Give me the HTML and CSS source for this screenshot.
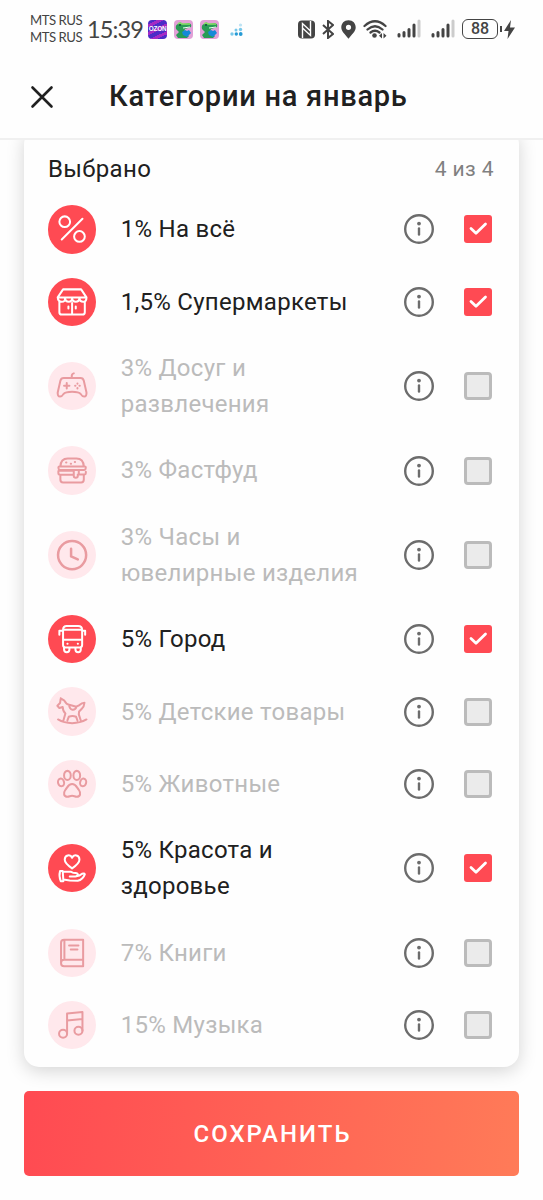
FILE: index.html
```html
<!DOCTYPE html>
<html lang="ru">
<head>
<meta charset="utf-8">
<title>Категории на январь</title>
<link rel="stylesheet" href="styles.css">
</head>
<body>
<svg class="defs" aria-hidden="true">
  <symbol id="percent" viewBox="-72 -72 144 144"><circle cx="-22" cy="-22" r="16"/><circle cx="22" cy="22" r="16"/><path d="M31-31-31 31"/></symbol>
  <symbol id="store" viewBox="-72 -72 144 144"><path d="M-43-14-27-38H27L43-14ZM-43-14q1 13 12 13T-21-12q1 11 11 11T0-12q1 11 11 11T22-12q1 11 11 11T43-14M-38 0V30q0 7 7 7H31q7 0 7-7V0M0 3V37M-11 13v6M11 13v6"/></symbol>
  <symbol id="gamepad" viewBox="-72 -72 144 144"><path d="M-25-24H25Q33-24 35-16L43 19Q44 31 36 31 30 31 26 24 20 17 0 17T-26 24Q-30 31-36 31-44 31-43 19L-35-16Q-33-24-25-24ZM-1-24v-6q0-7 6-8M-16-9V7M-24-1H-8"/><path class="dots" d="M16-8v1M16 6v1M9-1h1M22-1h1"/></symbol>
  <symbol id="burger" viewBox="-72 -72 144 144"><path d="M-35-11Q-34-35-13-35H13Q34-35 35-11M-38-11H38q3 0 3 4 0 6-5 7H-36q-5-1-5-7 0-4 3-4ZM-38 2H5V18q0 5 6 5t6-5V13H38q3 0 3-4V5M-41 3v6q0 5 5 5H5M20 3V12M-35 17V28q0 9 8 9H27q8 0 8-9V17"/><path class="dots" d="M-18-23h1M-4-19h1M8-24h1"/></symbol>
  <symbol id="clock" viewBox="-72 -72 144 144"><g class="bold"><circle cx="0" cy="0" r="42"/><path d="M-3-19V4L17 13"/></g></symbol>
  <symbol id="bus" viewBox="-72 -72 144 144"><path d="M-16-39H18q12 0 12 12V18q0 7-7 7H-20q-7 0-7-7V-27q0-12 11-12ZM-27-28H30M-27 2H30M-27-25H-38V-13M30-25H39V-13M-24 26v5q0 8 8 8t8-8V26M10 26v5q0 8 8 8t8-8V26"/><path class="dots" d="M-14 14h.5M17 14h.5"/></symbol>
  <symbol id="horse" viewBox="-72 -72 144 144"><path d="M-34-38-23-31Q-17-20-9-19-8-6 1-4 10-3 13-13L22-18Q29-25 37-25 36-13 29-7L21 1 20 10 26 28M-34-38-36-24-44-16-38-9-28-12Q-28 0-20 7L-26 28M-14 28-10 17Q1 12 12 17L16 28M-9-19 13-13M-42 25Q-24 36 0 36T43 25"/></symbol>
  <symbol id="paw" viewBox="-72 -72 144 144"><ellipse cx="-14" cy="-26" rx="10" ry="13.500"/><ellipse cx="14" cy="-26" rx="10" ry="13.500"/><ellipse cx="-33" cy="-5" rx="9" ry="11.500" transform="rotate(-15 -33 -5)"/><ellipse cx="33" cy="-5" rx="9" ry="11.500" transform="rotate(15 33 -5)"/><path d="M0 0C11 0 14 10 20 17 28 28 24 38 14 38 8 38 6 35 0 35S-8 38-14 38C-24 38-28 28-20 17-14 10-11 0 0 0Z"/></symbol>
  <symbol id="care" viewBox="-72 -72 144 144"><path d="M0 1C-14-9-22-16-22-25-22-40-5-42 0-31 5-42 22-40 22-25 22-16 14-9 0 1ZM-36 9h8l2 30h-8q-6-14-2-30ZM-26 11H-3Q4 15 10 15q7 0 7 5t-7 5H-7M13 24Q22 24 30 17q7-3 8 2Q32 35 17 38L-7 37-26 34"/></symbol>
  <symbol id="book" viewBox="-72 -72 144 144"><path d="M-24-40H33V39H-24q-9 0-9-9V-31q0-9 9-9ZM-23-40V20M-33 29q0-9 9-9H33M-9-23H19M-4-11H16"/></symbol>
  <symbol id="music" viewBox="-72 -72 144 144"><circle cx="-27" cy="26" r="12"/><circle cx="19" cy="17" r="12"/><path d="M-15 26V-35L31-39V17M-15-14 31-18"/></symbol>
  <symbol id="info" viewBox="0 0 30 30"><circle cx="15" cy="15" r="13.800"/><path d="M15 14.500V20.500"/><circle class="point" cx="15" cy="9.600" r="1.900"/></symbol>
  <symbol id="tick" viewBox="0 0 28 28"><path d="M7 13.500 12 18.200 21.500 9"/></symbol>
  <symbol id="croc" viewBox="0 0 19 19"><rect width="19" height="19" rx="4" fill="#e2a0d7"/><path d="M2 9Q1 5 4 4 6 1 9 4L15 3Q18 4 17 7L11 9 10 12 15 16 13 18H4L2 15 5 12Z" fill="#299c55"/><path d="M4 4Q6 2 8 4L16 4" stroke="#8bdf68" stroke-width="1.500" fill="none"/><path d="M9 8 16 7" stroke="#e9fff0" stroke-width="1"/><path d="m8 12 3-2 2 1 2-1 2 3-4 4-4-2Z" fill="#1689d7"/><circle cx="6" cy="5" r="1" fill="#194f43"/></symbol>
  <symbol id="signal" viewBox="0 0 24 20"><path d="M2 15.500V17M7 13.500V17M12 10.500V17M17 6V17"/><path class="faint" d="M22 2V17"/></symbol>
</svg>

<header class="top">
  <div class="status">
    <div class="carriers"><span>MTS RUS</span><span>MTS RUS</span></div>
    <time class="time">15:39</time>
    <div class="apps">
      <span class="ozon">OZON</span>
      <svg class="app"><use href="#croc"/></svg>
      <svg class="app"><use href="#croc"/></svg>
      <svg class="stairs" viewBox="0 0 13 13"><g fill="#79c8ea"><circle cx="2" cy="11" r="1.700"/><circle cx="6" cy="7" r="1.500"/><circle cx="10.500" cy="2" r="1.600" opacity=".5"/><circle cx="10.500" cy="6.500" r="1.700"/></g><g fill="#279bd5"><circle cx="6.300" cy="11" r="1.700"/><circle cx="10.700" cy="11" r="1.900"/></g></svg>
    </div>
    <div class="system">
      <svg class="nfc" viewBox="0 0 17 19"><rect width="17" height="18" y=".5" rx="4" fill="#444"/><path d="M4.500 18V3.500L12.500 11M4.500 8 12.500 15.500V1" fill="none" stroke="#fff" stroke-width="1.400"/></svg>
      <svg class="bluetooth" viewBox="0 0 12 19"><path d="m1 5 10 9-5 4V1l5 4-10 9"/></svg>
      <svg class="pin" viewBox="0 0 15 19"><path d="M7.500.3C3 .3.300 3.500.300 7.500c0 4 4 7 7.200 11.200 3.200-4.200 7.200-7.200 7.200-11.200 0-4-2.700-7.200-7.200-7.200Zm0 4.400a2.600 2.600 0 1 1 0 5.200 2.600 2.600 0 0 1 0-5.200Z"/></svg>
      <svg class="wifi" viewBox="0 0 24 20"><path d="M1.500 7Q12-2.500 22.500 7M4.500 10.500Q12 4 19.500 10.500M7.500 13.500Q12 10 16.500 13.500"/><circle cx="11.500" cy="16.500" r="2.300"/><path class="solid" d="m19 14-3 2.700 3 2.700ZM20.500 14l3 2.700-3 2.700Z"/></svg>
      <svg class="signal"><use href="#signal"/></svg>
      <svg class="signal"><use href="#signal"/></svg>
      <span class="battery">88</span>
      <svg class="bolt" viewBox="0 0 11 19"><path d="M7 0 0 11h4.500L3.500 19 11 7.500H6Z"/></svg>
    </div>
  </div>
  <div class="titlebar">
    <svg class="close" viewBox="0 0 24 24"><path d="m2.500 2.500 19 19M21.500 2.500l-19 19"/></svg>
    <h1>Категории на январь</h1>
  </div>
</header>

<main>
  <section class="card">
    <div class="summary"><span>Выбрано</span><span class="count">4 из 4</span></div>
    <ul>
      <li class="row on"><svg class="icon"><use href="#percent"/></svg><span class="label">1% На всё</span><svg class="info"><use href="#info"/></svg><svg class="check"><use href="#tick"/></svg></li>
      <li class="row on"><svg class="icon"><use href="#store"/></svg><span class="label">1,5% Супермаркеты</span><svg class="info"><use href="#info"/></svg><svg class="check"><use href="#tick"/></svg></li>
      <li class="row"><svg class="icon"><use href="#gamepad"/></svg><span class="label">3% Досуг и развлечения</span><svg class="info"><use href="#info"/></svg><span class="check"></span></li>
      <li class="row"><svg class="icon"><use href="#burger"/></svg><span class="label">3% Фастфуд</span><svg class="info"><use href="#info"/></svg><span class="check"></span></li>
      <li class="row"><svg class="icon"><use href="#clock"/></svg><span class="label">3% Часы и ювелирные изделия</span><svg class="info"><use href="#info"/></svg><span class="check"></span></li>
      <li class="row on"><svg class="icon"><use href="#bus"/></svg><span class="label">5% Город</span><svg class="info"><use href="#info"/></svg><svg class="check"><use href="#tick"/></svg></li>
      <li class="row"><svg class="icon"><use href="#horse"/></svg><span class="label">5% Детские товары</span><svg class="info"><use href="#info"/></svg><span class="check"></span></li>
      <li class="row"><svg class="icon"><use href="#paw"/></svg><span class="label">5% Животные</span><svg class="info"><use href="#info"/></svg><span class="check"></span></li>
      <li class="row on"><svg class="icon"><use href="#care"/></svg><span class="label">5% Красота и здоровье</span><svg class="info"><use href="#info"/></svg><svg class="check"><use href="#tick"/></svg></li>
      <li class="row"><svg class="icon"><use href="#book"/></svg><span class="label">7% Книги</span><svg class="info"><use href="#info"/></svg><span class="check"></span></li>
      <li class="row"><svg class="icon"><use href="#music"/></svg><span class="label">15% Музыка</span><svg class="info"><use href="#info"/></svg><span class="check"></span></li>
    </ul>
  </section>
  <button class="save">СОХРАНИТЬ</button>
</main>
</body>
</html>
```
FILE: styles.css
```css
* { box-sizing: border-box; }
body { margin: 0; height: 1200px; overflow: hidden; background: #fefefe; color: #202020; font-family: Roboto, sans-serif; }
svg { flex: none; fill: none; }
.defs { display: none; }

.top { position: relative; z-index: 1; height: 140px; background: #fefefe; border-bottom: 2px solid #f0f0f0; }
.status { display: flex; height: 58px; padding-left: 30px; align-items: center; color: #444; }
.carriers { display: flex; flex-direction: column; width: 57px; font: 13.2px/17px Lato, sans-serif; letter-spacing: -.5px; white-space: nowrap; }
.time { width: 60px; font: 23.5px/28px Lato, sans-serif; letter-spacing: -.9px; white-space: nowrap; }
.apps { display: flex; align-items: center; gap: 7px; width: 151px; margin-left: 1px; margin-right: -1px; }
.ozon { display: flex; justify-content: center; width: 19px; height: 19px; border-radius: 4px; background: repeating-linear-gradient(155deg, #4c2cc7 0 4px, #a52bc4 4px 7px); color: #fff; font: bold 6.4px/17px "Liberation Sans", sans-serif; letter-spacing: -.2px; }
.app { width: 19px; height: 19px; }
.stairs { width: 13px; height: 13px; margin-left: 4px; }
.system { display: flex; align-items: center; }
.nfc { width: 17px; height: 19px; }
.bluetooth { width: 12px; height: 19px; margin-left: 7px; stroke: #444; stroke-width: 2; }
.pin { width: 15px; height: 19px; margin-left: 7px; fill: #444; }
.wifi { width: 24px; height: 20px; margin-left: 7px; stroke: #444; stroke-width: 2.3; stroke-linecap: round; }
.wifi circle, .wifi .solid { fill: #444; stroke: none; }
.signal { width: 24px; height: 20px; margin-left: 10px; stroke: #444; stroke-width: 3; stroke-linecap: round; }
.faint { stroke: #ccc; }
.battery { position: relative; width: 36px; height: 20px; margin-left: 7px; border: 1.5px solid #444; border-radius: 6px; font: 500 16px/18px Roboto, sans-serif; text-align: center; }
.battery::after { content: ""; position: absolute; right: -5px; top: 6px; width: 2px; height: 6px; background: #444; }
.bolt { width: 11px; height: 19px; margin-left: 6px; fill: #444; }
.titlebar { display: flex; align-items: center; height: 78px; padding-left: 30px; }
.close { width: 24px; height: 24px; margin-right: 55px; stroke: #202020; stroke-width: 2.6; stroke-linecap: round; }
h1 { margin: -2px 0 0; font-size: 29px; font-weight: 500; line-height: 36px; letter-spacing: .75px; white-space: nowrap; }

main { padding: 0 24px; }
.card { height: 938px; margin-top: -11px; padding: 11px 24px 0; border-radius: 15px; background: #fefefe; box-shadow: 0 4px 18px rgba(0, 0, 0, .17); }
.summary { display: flex; justify-content: space-between; align-items: center; height: 53.3px; padding: 4px 1px 0 0; font-size: 24px; letter-spacing: .35px; }
.count { color: #808080; font-size: 21px; letter-spacing: .4px; }
ul { margin: 0; padding: 0; list-style: none; }
.row { display: flex; align-items: center; padding: 12.07px 3px 12.07px 0; color: #bbb; }
.row.on { color: #202020; }
.icon { width: 48.2px; height: 48.2px; border-radius: 50%; background: #ffe8ec; stroke: #e99ba0; stroke-width: 6; stroke-linecap: round; stroke-linejoin: round; }
.on .icon { background: #ff4a53; stroke: #fff; }
.bold { stroke-width: 7.5; }
.dots { stroke-width: 6; }
.label { flex: 1; margin: 0 24px 0 24.5px; font-size: 24px; line-height: 36.15px; letter-spacing: .28px; }
.info { width: 30px; height: 30px; margin-right: 30px; stroke: #6c6c6c; stroke-width: 2.4; stroke-linecap: round; }
.point { fill: #6c6c6c; stroke: none; }
.check { width: 28px; height: 28px; border: 3px solid #bbb; border-radius: 4px; background: #ebebeb; }
.on .check { border: 0; border-radius: 3px; background: #ff4a53; stroke: #fff; stroke-width: 2.8; stroke-linecap: round; stroke-linejoin: round; }
.save { display: block; width: 495px; height: 84.5px; margin-top: 24.4px; padding: 0 0 0 2px; border: 0; border-radius: 5px; background: linear-gradient(97deg, #ff4a52, #ff7b58); color: #fff; font: 500 24px/84px Roboto, sans-serif; letter-spacing: 2px; }
```
